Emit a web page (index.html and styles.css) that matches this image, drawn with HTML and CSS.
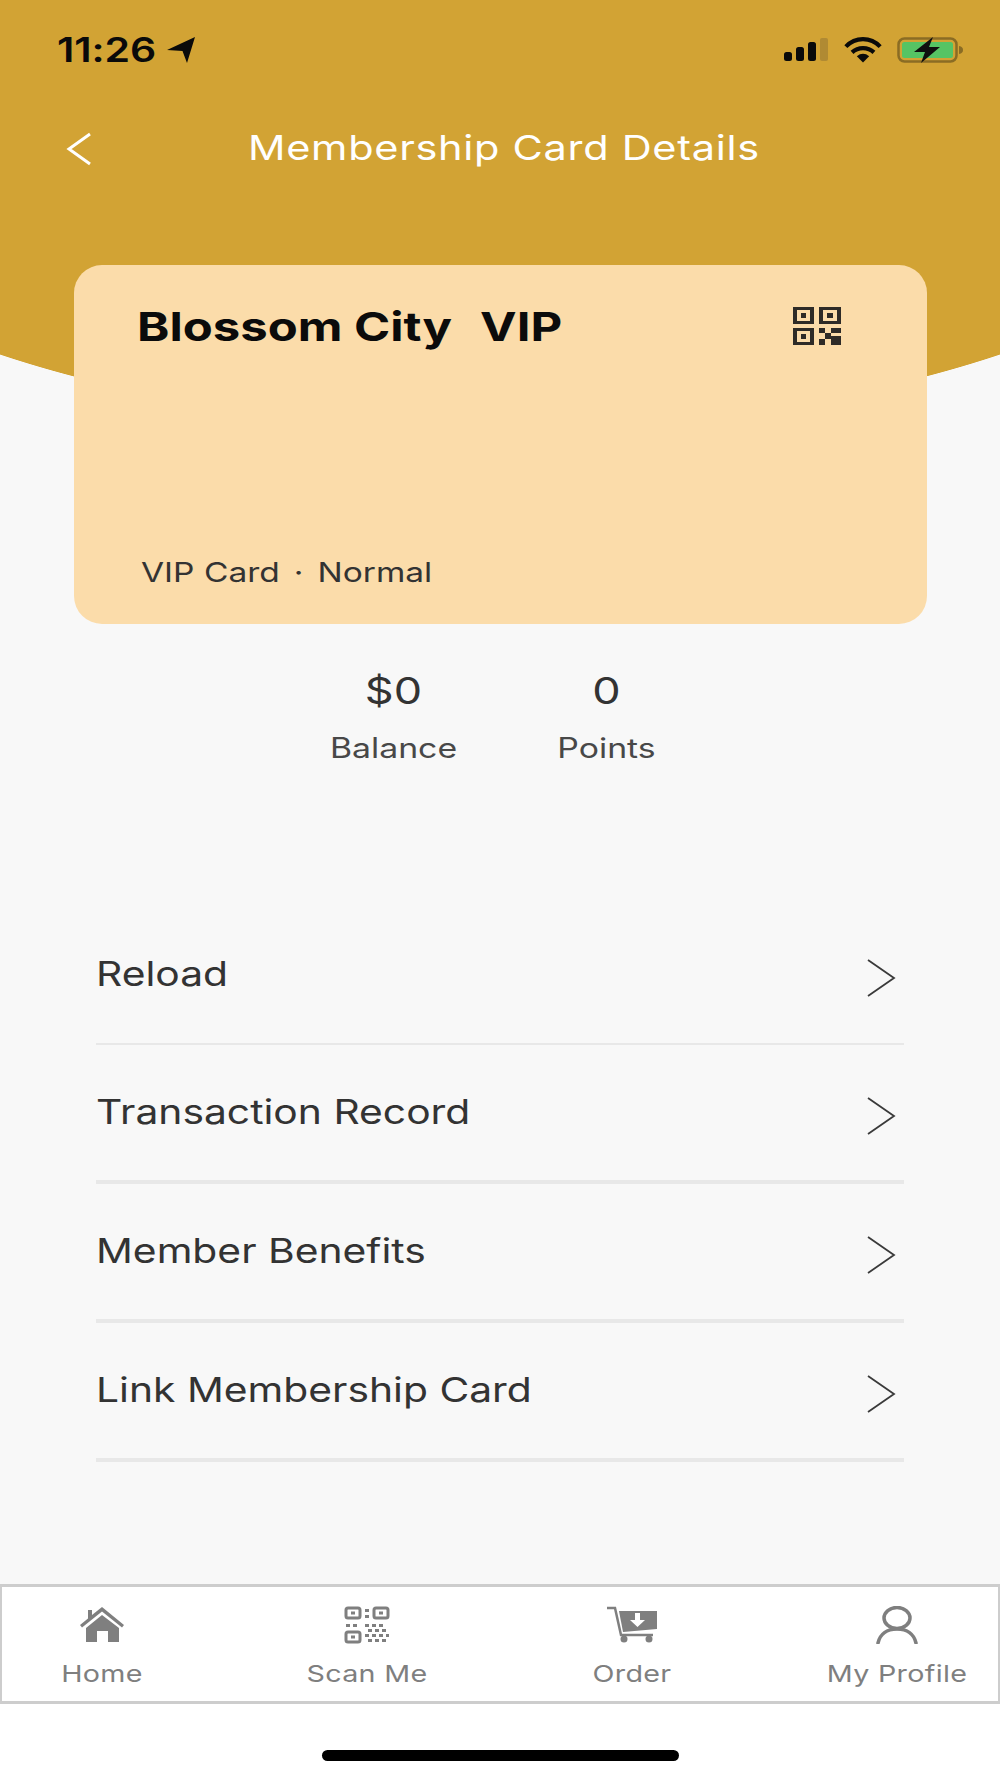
FILE: index.html
```html
<!DOCTYPE html>
<html lang="en">
<head>
<meta charset="utf-8">
<title>Membership Card Details</title>
<link rel="stylesheet" href="styles.css">
</head>
<body>
<div class="screen">
  <div class="status">
    <div class="status-left">
      <span class="time sq">11:26</span>
      <svg class="loc" viewBox="0 0 28 26"><path d="M0 13 28 0 20 26 15.500 14Z" fill="#0a0a0a"/></svg>
    </div>
    <div class="status-right">
      <svg class="signal" viewBox="0 0 46 26"><rect x="1" y="15" width="8" height="9" rx="2.500" fill="#0a0a0a"/><rect x="13" y="10" width="8" height="14" rx="2.500" fill="#0a0a0a"/><rect x="25" y="5" width="8" height="19" rx="2.500" fill="#0a0a0a"/><rect x="37" y="1" width="8" height="23" rx="2" fill="#b08a33"/></svg>
      <svg class="wifi" viewBox="0 0 42 26"><path d="M3 9.500C13-1 29-1 39 9.500" fill="none" stroke="#0a0a0a" stroke-width="4.400"/><path d="M9.500 15.500C16 9.500 26 9.500 32.500 15.500" fill="none" stroke="#0a0a0a" stroke-width="4.400"/><path d="M14.500 19.500Q21 14.500 27.500 19.500L21 26Z" fill="#0a0a0a"/></svg>
      <svg class="battery" viewBox="0 0 66 26"><rect x="1.500" y="1.500" width="58" height="23" rx="6" fill="none" stroke="#8a6c24" stroke-width="2.500"/><rect x="5" y="5" width="51" height="16" rx="2.500" fill="#56c464"/><path d="M62 9c3 .5 4 2 4 4s-1 3.500-4 4Z" fill="#8a6c24"/><path d="M36 0 17 15H28L24 26 43 10H32Z" fill="#0f0f0f"/></svg>
    </div>
  </div>
  <header class="nav">
    <svg class="back" viewBox="0 0 28 34"><path d="M25 2 4 17 25 32" fill="none" stroke="#fff" stroke-width="3"/></svg>
    <h1 class="nav-title sq">Membership Card Details</h1>
  </header>
  <section class="card">
    <div class="card-top">
      <h2 class="card-name sq">Blossom City<span class="name-gap"></span>VIP</h2>
      <svg class="qr" viewBox="0 0 48 38" shape-rendering="crispEdges">
        <path fill="#2e2b27" d="M0 0H21V17H0ZM26 0H48V17H26ZM0 21H21V38H0Z"/>
        <path fill="#fbdcaa" d="M4 3H17V14H4ZM30 3H44V14H30ZM4 24H17V35H4Z"/>
        <path fill="#2e2b27" d="M8 6H13V11H8ZM34 6H40V11H34ZM8 27H13V32H8ZM26 21H32V26H26ZM38 21H48V26H38ZM32 26H38V32H32ZM26 32H32V38H26ZM38 29H48V38H38Z"/>
      </svg>
    </div>
    <p class="card-type sq">VIP Card<span class="type-dot">·</span>Normal</p>
  </section>
  <section class="stats">
    <div class="stat"><span class="stat-value sq">$0</span><span class="stat-label sq">Balance</span></div>
    <div class="stat"><span class="stat-value sq">0</span><span class="stat-label sq">Points</span></div>
  </section>
  <nav class="menu">
    <a class="row row-thin"><span class="row-text sq">Reload</span><svg class="chev" viewBox="0 0 30 38"><path d="M2 1 28 19 2 37" fill="none" stroke="#3a3a3a" stroke-width="1.800"/></svg></a>
    <a class="row"><span class="row-text sq">Transaction Record</span><svg class="chev" viewBox="0 0 30 38"><path d="M2 1 28 19 2 37" fill="none" stroke="#3a3a3a" stroke-width="1.800"/></svg></a>
    <a class="row"><span class="row-text sq">Member Benefits</span><svg class="chev" viewBox="0 0 30 38"><path d="M2 1 28 19 2 37" fill="none" stroke="#3a3a3a" stroke-width="1.800"/></svg></a>
    <a class="row"><span class="row-text sq">Link Membership Card</span><svg class="chev" viewBox="0 0 30 38"><path d="M2 1 28 19 2 37" fill="none" stroke="#3a3a3a" stroke-width="1.800"/></svg></a>
  </nav>
  <footer class="tabs">
    <a class="tab">
      <svg class="tab-icon" viewBox="0 0 46 38"><path fill="#7f7f7f" d="M9 4h4v5l10-8 22 18-2 2.500L23 5.500 3 21.500 1 19 9 12.500Z"/><path fill="#7f7f7f" d="M23 9 40 22V36H29V25H18V36H7V22Z"/></svg>
      <span class="tab-label sq">Home</span>
    </a>
    <a class="tab">
      <svg class="tab-icon" viewBox="0 0 46 38">
        <g fill="none" stroke="#7f7f7f" stroke-width="3"><rect x="2" y="2" width="14" height="10" rx="2"/><rect x="30" y="2" width="14" height="10" rx="2"/><rect x="2" y="26" width="14" height="10" rx="2"/></g>
        <path fill="#7f7f7f" d="M7 5.500h4v3H7ZM35 5.500h4v3h-4ZM7 29.500h4v3H7ZM21 3h4v3h-4ZM21 9h4v3h-4ZM2 18h4v3H2ZM9 18h4v3H9ZM21 18h4v3h-4ZM28 18h4v3h-4ZM35 18h4v3h-4ZM24 23h4v3h-4ZM31 23h4v3h-4ZM38 23h4v3h-4ZM21 28h4v3h-4ZM28 28h4v3h-4ZM35 28h4v3h-4ZM42 28h3v3h-3ZM24 33h4v3h-4ZM31 33h4v3h-4ZM38 33h4v3h-4Z"/>
      </svg>
      <span class="tab-label sq">Scan Me</span>
    </a>
    <a class="tab">
      <svg class="tab-icon cart" viewBox="0 0 52 38">
        <path fill="none" stroke="#7f7f7f" stroke-width="2.500" d="M1 2H9L15 29H47"/>
        <path fill="#7f7f7f" d="M13 5H51V23L17 26Z"/>
        <path fill="#fff" d="M29 7h5v7h5l-7.500 7-7.500-7h5Z"/>
        <circle cx="18" cy="33" r="3.500" fill="#7f7f7f"/><circle cx="43" cy="33" r="3.500" fill="#7f7f7f"/>
      </svg>
      <span class="tab-label sq">Order</span>
    </a>
    <a class="tab">
      <svg class="tab-icon" viewBox="0 0 46 38"><ellipse cx="23" cy="12" rx="13" ry="10.500" fill="none" stroke="#7f7f7f" stroke-width="3.500"/><path d="M4 37C6 28 13 23 23 23S40 28 42 37" fill="none" stroke="#7f7f7f" stroke-width="3.500" stroke-linecap="round"/></svg>
      <span class="tab-label sq">My Profile</span>
    </a>
  </footer>
  <div class="home-bar"><span class="indicator"></span></div>
</div>
</body>
</html>
```

FILE: styles.css
```css
* { box-sizing: border-box; margin: 0; padding: 0; }
html, body { background: #fff; }
body { font-family: Inter, "Liberation Sans", sans-serif; }
.sq { display: inline-block; transform: scaleY(.82); white-space: nowrap; }

.screen {
  width: 1000px;
  height: 1778px;
  display: flex;
  flex-direction: column;
  overflow: hidden;
  background:
    radial-gradient(ellipse 800px 333px at 500px 95px, #d2a334 99.8%, transparent 100%) no-repeat,
    linear-gradient(#d2a334 95px, transparent 95px) no-repeat,
    #f8f8f8;
}

.status { height: 100px; padding: 29px 37px 0 57px; display: flex; justify-content: space-between; align-items: flex-start; }
.status-left { display: flex; align-items: center; gap: 11px; height: 42px; }
.time { font-size: 41px; font-weight: 600; line-height: 42px; color: #0a0a0a; letter-spacing: -.1px; }
.loc { width: 28px; height: 26px; }
.status-right { display: flex; align-items: center; height: 42px; gap: 14px; }
.signal { width: 46px; height: 26px; }
.wifi { width: 40px; height: 26px; }
.battery { width: 66px; height: 26px; }

.nav { height: 96px; padding: 0 0 0 65px; display: flex; align-items: center; margin-bottom: 69px; }
.back { width: 28px; height: 34px; margin-top: 2px; }
.nav-title { margin-left: 155px; font-size: 41.500px; font-weight: 400; line-height: 96px; color: #fff; letter-spacing: .7px; }

.card {
  width: 853px;
  height: 359px;
  margin-left: 74px;
  padding: 32px 86px 0 63px;
  background: #fbdcaa;
  border-radius: 28px;
  display: flex;
  flex-direction: column;
  justify-content: space-between;
  flex-shrink: 0;
}
.card-top { display: flex; justify-content: space-between; align-items: flex-start; }
.card-name { font-size: 49px; font-weight: 700; line-height: 60px; color: #0b0b0b; }
.name-gap { display: inline-block; width: 28px; }
.qr { width: 48px; height: 38px; margin-top: 10px; }
.card-type { font-size: 33.500px; line-height: 40px; color: #333; margin: 0 0 32px 4px; }
.type-dot { display: inline-block; margin: 0 14px; }

.stats { display: flex; justify-content: center; gap: 87px; margin-top: 42px; height: 135px; }
.stat { display: flex; flex-direction: column; align-items: center; width: 126px; }
.stat-value { font-size: 45px; line-height: 50px; color: #333; }
.stat-label { font-size: 33.800px; line-height: 40px; margin-top: 12px; color: #484848; }

.menu { margin: 105px 96px 0; }
.row { height: 139px; display: flex; justify-content: space-between; align-items: center; border-bottom: 4px solid #e8e8e8; padding: 0 8px 0 0; }
.row-thin { border-bottom-width: 2px; }
.row-text { font-size: 40.800px; line-height: 50px; color: #333; margin-top: -2px; }
.chev { width: 30px; height: 38px; margin-top: 7px; }

.tabs {
  margin-top: auto;
  height: 120px;
  padding: 0 31px 0 30px;
  display: flex;
  justify-content: space-between;
  background: #fff;
  border: 3px solid #cdcdcd;
  border-left-width: 2px;
  border-right-width: 2px;
}
.tab { width: 140px; display: flex; flex-direction: column; align-items: center; padding-top: 19px; }
.tab-icon { width: 46px; height: 38px; }
.cart { width: 52px; }
.tab-label { font-size: 28.700px; line-height: 34px; margin-top: 13px; color: #7f7f7f; letter-spacing: .3px; }

.home-bar { height: 74px; display: flex; justify-content: center; padding-top: 46px; background: #fff; }
.indicator { width: 357px; height: 11px; border-radius: 6px; background: #000; }
```
